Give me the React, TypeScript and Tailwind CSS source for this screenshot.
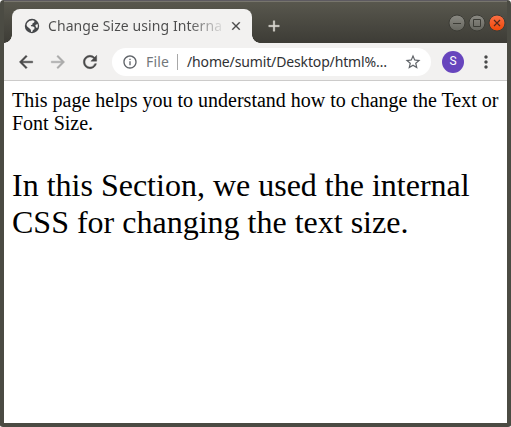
import { MdInfoOutline, MdStarBorder, MdMoreVert } from "react-icons/md";

function Glyph({ d, className }: { d: string; className: string }) {
  return (
    <svg className={className} viewBox="0 0 24 24" fill="currentColor" stroke="currentColor" strokeWidth="0.5">
      <path d={d} />
    </svg>
  );
}

const BACK = "M20 11H7.83l5.59-5.59L12 4l-8 8 8 8 1.41-1.41L7.83 13H20z";
const FORWARD = "m12 4-1.41 1.41L16.17 11H4v2h12.17l-5.58 5.59L12 20l8-8z";
const RELOAD =
  "M17.65 6.35A7.958 7.958 0 0 0 12 4c-4.42 0-7.99 3.58-7.99 8s3.57 8 7.99 8c3.73 0 6.84-2.55 7.73-6h-2.08A5.99 5.99 0 0 1 12 18c-3.31 0-6-2.69-6-6s2.69-6 6-6c1.66 0 3.14.69 4.22 1.78L13 11h7V4z";
const CLOSE = "M19 6.41 17.59 5 12 10.59 6.41 5 5 6.41 10.59 12 5 17.59 6.41 19 12 13.41 17.59 19 19 17.59 13.41 12z";
const PLUS = "M19 13h-6v6h-2v-6H5v-2h6V5h2v6h6z";

function Globe() {
  return (
    <svg className="size-[16px] shrink-0" viewBox="0 0 16 16">
      <circle cx="8" cy="8" r="7.2" fill="#45474a" />
      <path
        d="M8.7 2.2 10.5 3l-.4 1.5-1.5.7-.3 1.6-1.5.5.3 1 2.1.1 1.4 1.2-.3 1.6-1.4.8-.5 1.7-1.3.2-.3-2.2-1.2-1.3-2.4-1.9-.7-1.4.6-2.2 2.2-2zM11.3 7l2.3-1.1.3 2.1-.6 2-1.3-.5z"
        fill="#f2f1f0"
      />
    </svg>
  );
}

function Tab() {
  return (
    <div className="relative ml-2 flex h-[34px] w-[240px] items-center rounded-t-lg bg-[#f2f1f0] pl-3">
      <span className="absolute bottom-0 -left-2 h-2 w-2 bg-[radial-gradient(circle_at_0_0,transparent_7.5px,#f2f1f0_8px)]" />
      <span className="absolute bottom-0 -right-2 h-2 w-2 bg-[radial-gradient(circle_at_100%_0,transparent_7.5px,#f2f1f0_8px)]" />
      <Globe />
      <span className="ml-[8px] w-[180px] whitespace-nowrap bg-[linear-gradient(90deg,#4c4c4c_140px,transparent_178px)] bg-clip-text font-['Noto_Sans',sans-serif] text-[14px] leading-5 tracking-[0.08px] text-transparent">
        Change Size using Interna
      </span>
      <Glyph d={CLOSE} className="ml-px size-[14px] shrink-0 text-[#454545]" />
    </div>
  );
}

function WindowButtons() {
  return (
    <svg className="mt-[5px] ml-auto h-5 w-[61px]" viewBox="0 0 61 20" fill="none">
      <defs>
        <linearGradient id="grey" x1="0" y1="0" x2="0" y2="1">
          <stop stopColor="#8b8a83" />
          <stop offset="1" stopColor="#65655e" />
        </linearGradient>
        <linearGradient id="orange" x1="0" y1="0" x2="0" y2="1">
          <stop stopColor="#fa7046" />
          <stop offset="1" stopColor="#f04706" />
        </linearGradient>
      </defs>
      <g stroke="#3c3c36">
        <circle cx="11" cy="9" r="8" fill="url(#grey)" />
        <circle cx="31" cy="9" r="8" fill="url(#grey)" />
        <circle cx="51" cy="9" r="8" fill="url(#orange)" />
        <path d="M7 9.5h8M27.5 5.5h7v7h-7z" />
        <path d="m48 6 6 6m0-6-6 6" stroke="#51291d" strokeWidth="1.2" />
      </g>
    </svg>
  );
}

export default function App() {
  return (
    <div className="h-[427px] w-[511px] bg-white">
      <div className="flex h-full flex-col overflow-hidden rounded-t-[4px] rounded-b-[3px] border-x-4 border-b-4 border-[#4b4b43] bg-white">
        <header className="-mx-1 flex h-[43px] shrink-0 border-t border-[#5d5a60] bg-linear-to-b from-[#59584e] to-[#3d3c36] px-1 pt-2 shadow-[inset_0_1px_#77756c]">
          <Tab />
          <Glyph d={PLUS} className="mt-[8px] ml-[13px] size-[18px] text-[#dedcd5]" />
          <WindowButtons />
        </header>
        <nav className="flex h-[38px] shrink-0 items-center border-b border-[#cccbca] bg-[#f2f1f0] pl-[12px] text-[#494949]">
          <Glyph d={BACK} className="size-5" />
          <Glyph d={FORWARD} className="ml-3 size-5 text-[#ababaa]" />
          <Glyph d={RELOAD} className="ml-3 size-5" />
          <div className="ml-[12px] flex h-7 w-[319px] items-center rounded-full bg-white pl-[10px] font-['Noto_Sans',sans-serif] text-[14px] leading-5">
            <MdInfoOutline className="size-4 text-[#5f6368]" />
            <span className="ml-2 w-[31px] tracking-[0.2px] text-[#73777b]">File</span>
            <span className="h-4 w-px bg-[#a8a8a8]" />
            <span className="ml-[9px] w-[217px] whitespace-nowrap tracking-[-0.14px] text-[#303134]">/home/sumit/Desktop/html%…</span>
            <MdStarBorder className="size-[18px] text-[#5f6368]" />
          </div>
          <span className="ml-[11px] flex size-[22px] items-center justify-center rounded-full bg-[#6745bd] pb-px font-[Roboto,sans-serif] text-[12px] text-white">S</span>
          <MdMoreVert className="ml-[12px] size-5" />
        </nav>
        <main className="grow bg-white px-2 pt-[8px] font-['Liberation_Serif',serif] text-black">
          <p className="text-[20px] leading-[23px]">This page helps you to understand how to change the Text or Font Size.</p>
          <p className="mt-[32px] text-[32px] leading-[37px]">In this Section, we used the internal CSS for changing the text size.</p>
        </main>
      </div>
    </div>
  );
}
